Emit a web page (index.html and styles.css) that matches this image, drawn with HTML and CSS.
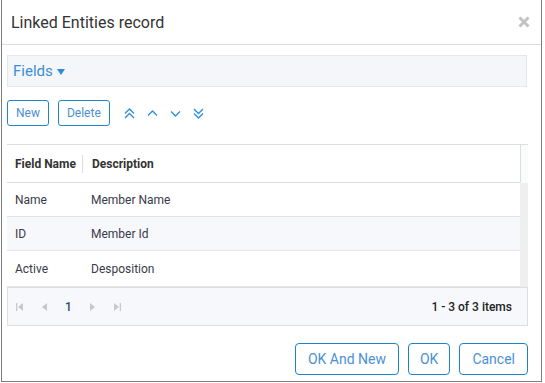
FILE: index.html
```html
<!DOCTYPE html>
<html>
<head>
   <meta charset="UTF-8">
   <title>Linked Entities record</title>
   <link rel="stylesheet" href="styles.css">
</head>
<body>
   <div class="dialog">
      <div class="dialog-head">
         <span class="dialog-title">Linked Entities record</span>
         <svg class="dialog-close" width="12" height="12" viewBox="0 0 12 12"><path d="M1.5 1.5 L10.5 10.5 M10.5 1.5 L1.5 10.5" stroke="#c2c2c2" stroke-width="3"/></svg>
      </div>

      <div class="dialog-body">
         <div class="section-bar">
            <span class="section-title">Fields</span>
            <span class="section-caret"></span>
         </div>

         <div class="toolbar">
            <button class="btn-small">New</button>
            <button class="btn-small">Delete</button>
            <span class="move-icons">
               <svg width="11" height="11" viewBox="0 0 11 11"><path d="M1 5.5 L5.5 1 L10 5.5 M1 10 L5.5 5.5 L10 10" fill="none" stroke="#2f8fdc" stroke-width="1.4"/></svg>
               <svg width="11" height="11" viewBox="0 0 11 11"><path d="M1 7.5 L5.5 3 L10 7.5" fill="none" stroke="#2f8fdc" stroke-width="1.4"/></svg>
               <svg width="11" height="11" viewBox="0 0 11 11"><path d="M1 3.5 L5.5 8 L10 3.5" fill="none" stroke="#2f8fdc" stroke-width="1.4"/></svg>
               <svg width="11" height="11" viewBox="0 0 11 11"><path d="M1 1 L5.5 5.5 L10 1 M1 5.5 L5.5 10 L10 5.5" fill="none" stroke="#2f8fdc" stroke-width="1.4"/></svg>
            </span>
         </div>

         <div class="grid">
            <div class="grid-main">
               <div class="grid-head">
                  <div class="cell col-name">Field Name</div>
                  <div class="cell col-desc">Description</div>
               </div>
               <div class="grid-row">
                  <div class="cell col-name">Name</div>
                  <div class="cell col-desc">Member Name</div>
               </div>
               <div class="grid-row alt">
                  <div class="cell col-name">ID</div>
                  <div class="cell col-desc">Member Id</div>
               </div>
               <div class="grid-row last">
                  <div class="cell col-name">Active</div>
                  <div class="cell col-desc">Desposition</div>
               </div>
            </div>
            <div class="grid-scroll">
               <div class="scroll-head"></div>
               <div class="scroll-track"></div>
            </div>
         </div>

         <div class="pager">
            <div class="pager-nav">
               <svg width="7" height="8" viewBox="0 0 7 8"><path d="M0 0 H1.3 V8 H0 Z M7 0 V8 L2 4 Z" fill="#c5c8cd"/></svg>
               <svg width="6" height="8" viewBox="0 0 6 8"><path d="M6 0 V8 L1 4 Z" fill="#c5c8cd"/></svg>
               <span class="pager-page">1</span>
               <svg width="6" height="8" viewBox="0 0 6 8"><path d="M0 0 V8 L5 4 Z" fill="#c5c8cd"/></svg>
               <svg width="7" height="8" viewBox="0 0 7 8"><path d="M0 0 V8 L5 4 Z M5.7 0 H7 V8 H5.7 Z" fill="#c5c8cd"/></svg>
            </div>
            <span class="pager-info">1 - 3 of 3 items</span>
         </div>

         <div class="dialog-foot">
            <button class="btn">OK And New</button>
            <button class="btn btn-ok">OK</button>
            <button class="btn">Cancel</button>
         </div>
      </div>
   </div>
</body>
</html>
```

FILE: styles.css
```css
      body {
         margin: 0;
         background: white;
         font-family: Roboto, "Liberation Sans", sans-serif;
         color: #333;
      }
      .dialog {
         margin-left: 1px;
         width: 541px;
         height: 382px;
         box-sizing: border-box;
         border: 1px solid #7d7d7d;
         border-top: none;
         background: white;
      }
      .dialog-head {
         height: 44px;
         border-bottom: 1px solid #dcdcdc;
         display: flex;
         justify-content: space-between;
         align-items: center;
         padding: 0 11px 0 9px;
      }
      .dialog-title {
         font-size: 16px;
         color: #333;
         margin-top: 1px;
      }
      .dialog-body {
         padding: 10px 13px 0 5px;
      }
      .section-bar {
         height: 30px;
         background: #f5f6fa;
         border: 1px solid #e4e6ea;
         display: flex;
         align-items: center;
         padding-left: 5px;
         margin-right: 1px;
      }
      .section-title {
         font-size: 15px;
         color: #3a8fd6;
      }
      .section-caret {
         margin-left: 4px;
         border-left: 4px solid transparent;
         border-right: 4px solid transparent;
         border-top: 6px solid #2a8bd8;
         margin-top: 1px;
      }
      .toolbar {
         display: flex;
         align-items: center;
         margin-top: 13px;
      }
      .btn-small {
         height: 26px;
         padding: 0 8px;
         margin-right: 9px;
         background: white;
         border: 1px solid #2384c6;
         border-radius: 3px;
         font-family: Roboto, "Liberation Sans", sans-serif;
         font-size: 12px;
         color: #4a8fd3;
      }
      .move-icons {
         display: flex;
         gap: 12px;
         margin-left: 5px;
      }
      .grid {
         margin-top: 18px;
         border-top: 1px solid #dedede;
         display: flex;
      }
      .grid-main {
         flex: 1;
      }
      .grid-head {
         height: 37px;
         display: flex;
         align-items: center;
         border-bottom: 1px solid #dedede;
         font-size: 12px;
         font-weight: bold;
         color: #333;
      }
      .grid-head .col-name {
         border-right: 1px solid #dedede;
         height: 18px;
         line-height: 18px;
      }
      .grid-row {
         height: 33px;
         display: flex;
         align-items: center;
         border-bottom: 1px solid #e4e4e4;
         font-size: 12px;
         color: #3a3a4a;
      }
      .grid-row.last {
         height: 35px;
      }
      .grid-row.alt {
         background: #f7f8fc;
      }
      .cell {
         padding-left: 8px;
      }
      .col-name {
         width: 67px;
      }
      .col-desc {
         padding-left: 9px;
      }
      .grid-scroll {
         width: 8px;
         display: flex;
         flex-direction: column;
      }
      .scroll-head {
         height: 37px;
         background: #fafbfc;
         border-left: 1px solid #dedede;
         border-bottom: 1px solid transparent;
      }
      .scroll-track {
         flex: 1;
         background: #efefef;
      }
      .pager {
         height: 37px;
         background: #f7f8fc;
         border: 1px solid #dedede;
         display: flex;
         justify-content: space-between;
         align-items: center;
         padding: 0 15px 0 8px;
      }
      .pager-nav {
         display: flex;
         align-items: center;
         gap: 18px;
      }
      .pager-page {
         font-size: 12px;
         font-weight: 500;
         color: #1f4e6e;
      }
      .pager-info {
         font-size: 12px;
         font-weight: 500;
         color: #222;
      }
      .dialog-foot {
         display: flex;
         justify-content: flex-end;
         gap: 9px;
         margin-top: 17px;
      }
      .btn {
         height: 32px;
         padding: 0 12px;
         background: white;
         border: 1px solid #1a84c8;
         border-radius: 4px;
         font-family: Roboto, "Liberation Sans", sans-serif;
         font-size: 14px;
         color: #4a90d6;
      }
      .btn-ok {
         padding: 0 11px;
      }
```
